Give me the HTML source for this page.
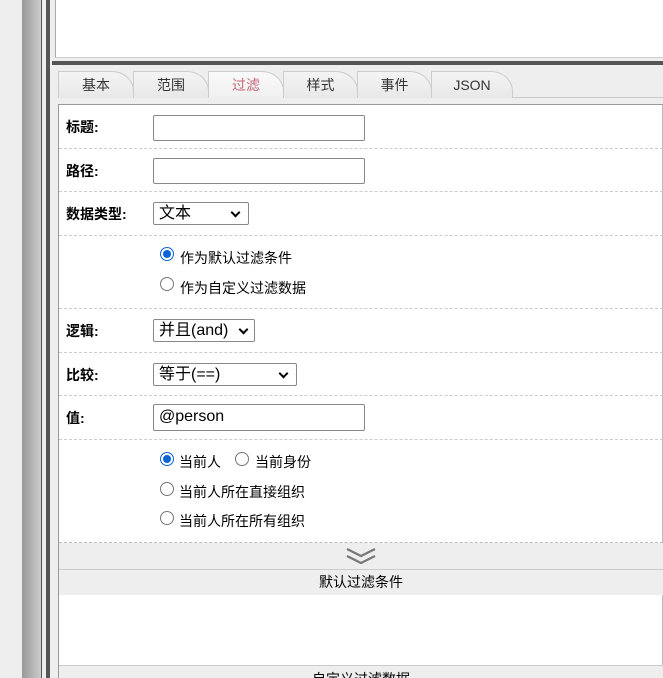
<!DOCTYPE html>
<html><head><meta charset="utf-8"><style>
*{margin:0;padding:0;box-sizing:border-box}
body{width:663px;height:678px;overflow:hidden;background:#eee;position:relative;font-family:"Liberation Sans","Noto Sans CJK SC",sans-serif;font-size:14px;color:#000}
.a{position:absolute}
.tab{position:absolute;top:71px;height:27px;border:1px solid #ccc;border-bottom:none;border-top-right-radius:22px 20px;background:linear-gradient(#f4f4f4,#e8e8e8);text-align:center;line-height:26px;font-size:14px;color:#333}
.sep{position:absolute;left:59px;width:604px;border-top:1px dashed #ccc}
.lbl{position:absolute;left:66px;font-weight:bold;font-size:14px}
.inp{position:absolute;left:153px;border:1px solid #888;border-radius:2px;background:#fff;font-size:16px;padding-left:5px}
.chev{position:absolute;right:9px;top:6px;width:7px;height:7px;border-right:2px solid #000;border-bottom:2px solid #000;transform:rotate(45deg)}
.rad{position:absolute;width:14px;height:14px;border:1px solid #767676;border-radius:50%;background:#fff}
.rad.on{border:1px solid #0b63d5;background:#fff}
.rad.on::after{content:"";position:absolute;left:2px;top:2px;width:8px;height:8px;border-radius:50%;background:#0b63d5}
.rt{position:absolute;font-size:14px}
</style></head><body>
<div class="a" style="left:22px;top:0;width:19px;height:678px;background:linear-gradient(90deg,#999,#ccc)"></div>
<div class="a" style="left:41px;top:0;width:1px;height:678px;background:#555"></div>
<div class="a" style="left:46px;top:0;width:4px;height:678px;background:#555"></div>
<div class="a" style="left:55px;top:0;width:608px;height:58px;background:#fff;border-left:1px solid #aaa;border-bottom:1px solid #ccc"></div>
<div class="a" style="left:52px;top:61px;width:611px;height:4px;background:#555"></div>
<div class="a" style="left:58px;top:97px;width:605px;height:1px;background:#ccc"></div>
<div class="tab" style="left:58px;width:76px">基本</div>
<div class="tab" style="left:133px;width:76px">范围</div>
<div class="tab" style="left:208px;width:76px;background:linear-gradient(#fafafa,#f0f0f0);color:#c8677a">过滤</div>
<div class="tab" style="left:283px;width:75px">样式</div>
<div class="tab" style="left:357px;width:75px">事件</div>
<div class="tab" style="left:431px;width:82px">JSON</div>
<div class="a" style="left:58px;top:104px;width:605px;height:574px;background:#fff;border:1px solid #999;border-right:1px solid #bbb"></div>
<div class="lbl" style="top:117px">标题:</div>
<div class="inp" style="top:115px;width:212px;height:26px"></div>
<div class="sep" style="top:148px"></div>
<div class="lbl" style="top:161px">路径:</div>
<div class="inp" style="top:158px;width:212px;height:26px"></div>
<div class="sep" style="top:191px"></div>
<div class="lbl" style="top:204px">数据类型:</div>
<div class="inp" style="top:202px;width:96px;height:23px;line-height:21px">文本<span class="chev"></span></div>
<div class="sep" style="top:235px"></div>
<div class="rad on" style="left:160px;top:247px"></div><div class="rt" style="left:180px;top:248px">作为默认过滤条件</div>
<div class="rad" style="left:160px;top:277px"></div><div class="rt" style="left:180px;top:278px">作为自定义过滤数据</div>
<div class="sep" style="top:308px"></div>
<div class="lbl" style="top:321px">逻辑:</div>
<div class="inp" style="top:319px;width:102px;height:23px;line-height:21px">并且(and)<span class="chev" style="right:7px"></span></div>
<div class="sep" style="top:352px"></div>
<div class="lbl" style="top:365px">比较:</div>
<div class="inp" style="top:363px;width:144px;height:23px;line-height:21px">等于(==)<span class="chev"></span></div>
<div class="sep" style="top:395px"></div>
<div class="lbl" style="top:408px">值:</div>
<div class="inp" style="top:404px;width:212px;height:27px;line-height:24px">@person</div>
<div class="sep" style="top:439px"></div>
<div class="rad on" style="left:160px;top:452px"></div><div class="rt" style="left:179px;top:452px">当前人</div>
<div class="rad" style="left:235px;top:452px"></div><div class="rt" style="left:255px;top:452px">当前身份</div>
<div class="rad" style="left:160px;top:482px"></div><div class="rt" style="left:179px;top:482px">当前人所在直接组织</div>
<div class="rad" style="left:160px;top:511px"></div><div class="rt" style="left:179px;top:511px">当前人所在所有组织</div>
<div class="sep" style="top:542px;border-top-color:#bbb"></div>
<div class="a" style="left:59px;top:543px;width:604px;height:27px;background:#eee;border-bottom:1px solid #ccc"></div>
<svg class="a" style="left:345px;top:546px" width="32" height="20" viewBox="0 0 32 20"><path d="M2 3 L16 10 L30 3 M2 10 L16 17 L30 10" stroke="#777" stroke-width="2.2" fill="none"/></svg>
<div class="a" style="left:59px;top:570px;width:604px;height:25px;background:#eee;text-align:center;line-height:25px;font-size:14px">默认过滤条件</div>
<div class="a" style="left:59px;top:665px;width:604px;height:13px;background:#eee;border-top:1px solid #ccc;text-align:center;line-height:26px;font-size:14px;overflow:hidden">自定义过滤数据</div>
</body></html>
